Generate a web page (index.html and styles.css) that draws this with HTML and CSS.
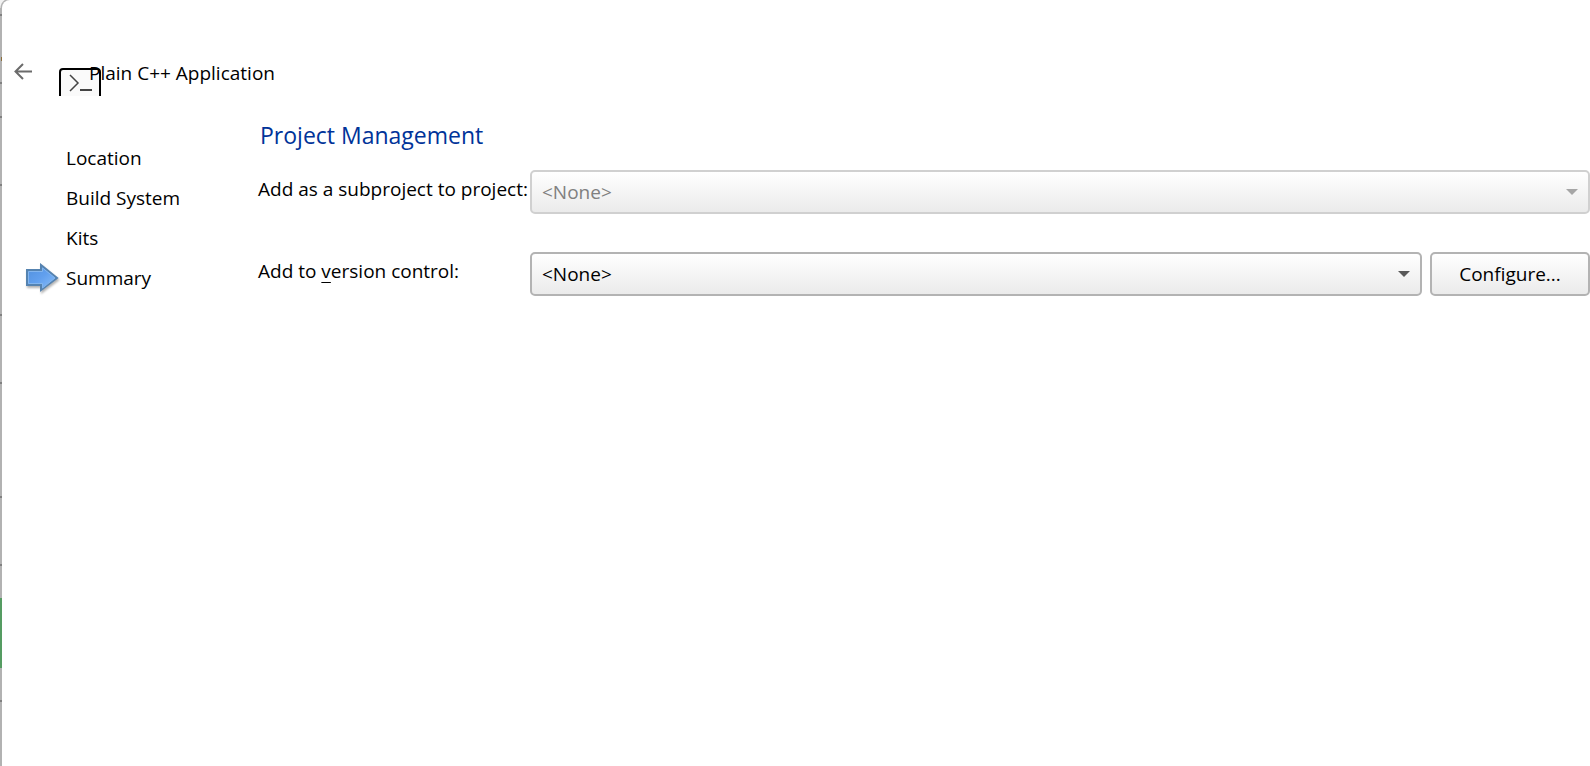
FILE: index.html
```html
<!DOCTYPE html>
<html lang="en">
<head>
  <meta charset="UTF-8">
  <meta name="viewport" content="width=device-width, initial-scale=1.0">
  <title>Plain C++ Application</title>
  <link rel="stylesheet" href="styles.css">
</head>
<body>
  <div class="wizard">
    <header class="wizard-header">
      <button class="back" type="button" aria-label="Back">
        <svg width="18" height="18" viewBox="0 0 18 18" fill="none" stroke="#6b6b6b" stroke-width="2">
          <path d="M9 1 L1.500 8.500 L9 16 M1.500 8.500 H18"/>
        </svg>
      </button>
      <svg class="app-icon" width="42" height="28" viewBox="0 0 42 28" fill="none">
        <path d="M1 28 V4 Q1 1 4 1 H38 Q41 1 41 4 V28" fill="#fafafa" stroke="#000" stroke-width="2"/>
        <path d="M11 7 L19 15 L11 23" stroke="#444" stroke-width="1.500"/>
        <path d="M21 22 H33" stroke="#444" stroke-width="2"/>
      </svg>
      <h1>Plain C++ Application</h1>
    </header>

    <div class="wizard-body">
      <ol class="steps">
        <li>Location</li>
        <li>Build System</li>
        <li>Kits</li>
        <li aria-current="step">
          <svg class="arrow" width="34" height="30" viewBox="0 0 34 30">
            <defs>
              <linearGradient id="arrowFill" x1="0" y1="0" x2="1" y2="1">
                <stop offset="0" stop-color="#4f8fdd"/>
                <stop offset="0.5" stop-color="#62a0ee"/>
                <stop offset="1" stop-color="#8fc2fb"/>
              </linearGradient>
            </defs>
            <path d="M1 7 H15 V2 L31 15 L15 27 V22 H1 Z" fill="url(#arrowFill)" stroke="#5583b0" stroke-width="2"/>
            <path d="M2.500 20.500 V8.500 H16.500 V5 L29 15 L16.500 25 V20.500 Z" fill="none" stroke="#82b5ee" stroke-width="1"/>
          </svg>
          Summary
        </li>
      </ol>

      <form class="page">
        <h2>Project Management</h2>
        <div class="row">
          <label for="project">Add as a subproject to project:</label>
          <div class="combo disabled">
            <select id="project" disabled>
              <option>&lt;None&gt;</option>
            </select>
          </div>
        </div>
        <div class="row">
          <label for="vcs">Add to <span class="key">v</span>ersion control:</label>
          <div class="combo">
            <select id="vcs">
              <option>&lt;None&gt;</option>
            </select>
          </div>
          <button class="configure" type="button">Configure...</button>
        </div>
      </form>
    </div>
  </div>
</body>
</html>
```
FILE: styles.css
```css
* {
  box-sizing: border-box;
}

/* The window behind shows as a thin strip on the left */
body {
  margin: 0;
  padding-left: 2px;
  min-height: 100vh;
  display: flex;
  font-family: "Open Sans", "Noto Sans", sans-serif;
  font-size: 19px;
  line-height: 24px;
  color: #000;
  background:
    radial-gradient(circle at 10px 8px, #b2b2b2 9px, #f2f2f2 10px) 0 0 / 10px 8px no-repeat,
    linear-gradient(#8a6d3b, #8a6d3b) 1px 57px / 1px 4px no-repeat,
    linear-gradient(#808080, #808080) 0 14px / 2px 2px no-repeat,
    linear-gradient(#808080, #808080) 0 82px / 2px 2px no-repeat,
    linear-gradient(#808080, #808080) 0 116px / 2px 2px no-repeat,
    linear-gradient(#808080, #808080) 0 184px / 2px 2px no-repeat,
    linear-gradient(#808080, #808080) 0 314px / 2px 2px no-repeat,
    linear-gradient(#808080, #808080) 0 382px / 2px 2px no-repeat,
    linear-gradient(#808080, #808080) 0 496px / 2px 2px no-repeat,
    linear-gradient(#808080, #808080) 0 564px / 2px 2px no-repeat,
    linear-gradient(#808080, #808080) 0 700px / 2px 2px no-repeat,
    linear-gradient(#559c62, #559c62) 0 598px / 2px 70px no-repeat,
    #b2b2b2;
}

.wizard {
  flex: 1;
  background: #fff;
  border-top-left-radius: 8px;
}

.wizard-header {
  display: flex;
  align-items: flex-start;
  padding: 61px 0 0 12px;
}

.wizard-header h1 {
  margin: 0 0 0 -12px;
  font-size: 19px;
  font-weight: normal;
  z-index: 1;
}

.back {
  display: flex;
  padding: 2px 0;
  border: none;
  background: none;
}

.app-icon {
  margin: 7px 0 0 27px;
}

.wizard-body {
  display: grid;
  grid-template-columns: 192px 1fr;
  column-gap: 64px;
  padding-top: 22px;
}

.steps {
  list-style: none;
  margin: 0;
  padding: 20px 0 0 64px;
}

.steps li {
  position: relative;
  line-height: 40px;
}

.arrow {
  position: absolute;
  left: -40px;
  top: 5px;
  filter: drop-shadow(1px 2px 1px rgba(0, 0, 0, 0.3));
}

.page h2 {
  margin: 0 0 18px;
  padding-left: 2px;
  font-size: 23px;
  line-height: 34px;
  font-weight: normal;
  color: #003399;
}

.row {
  display: flex;
  align-items: flex-start;
  gap: 8px;
  margin-bottom: 38px;
}

.row label {
  flex: 0 0 264px;
  min-width: 0;
  padding-top: 7px;
  white-space: nowrap;
}

.key {
  text-decoration: underline;
  text-underline-offset: 4px;
}

.combo {
  flex: 1;
  position: relative;
}

.combo::after {
  content: "";
  position: absolute;
  right: 12px;
  top: 19px;
  border: 6px solid transparent;
  border-top-color: #595959;
  border-bottom: none;
  pointer-events: none;
}

.combo.disabled::after {
  border-top-color: #a6a6a6;
}

select,
.configure {
  height: 44px;
  border: 2px solid #b3b3b3;
  border-radius: 5px;
  background: linear-gradient(#fff, #ebebeb);
  font: inherit;
  color: #000;
}

select {
  display: block;
  width: 100%;
  padding: 0 10px;
  appearance: none;
}

select:disabled {
  border-color: #d0d0d0;
  color: #808080;
  opacity: 1;
}

.configure {
  flex: 0 0 160px;
  padding: 0;
}
```
